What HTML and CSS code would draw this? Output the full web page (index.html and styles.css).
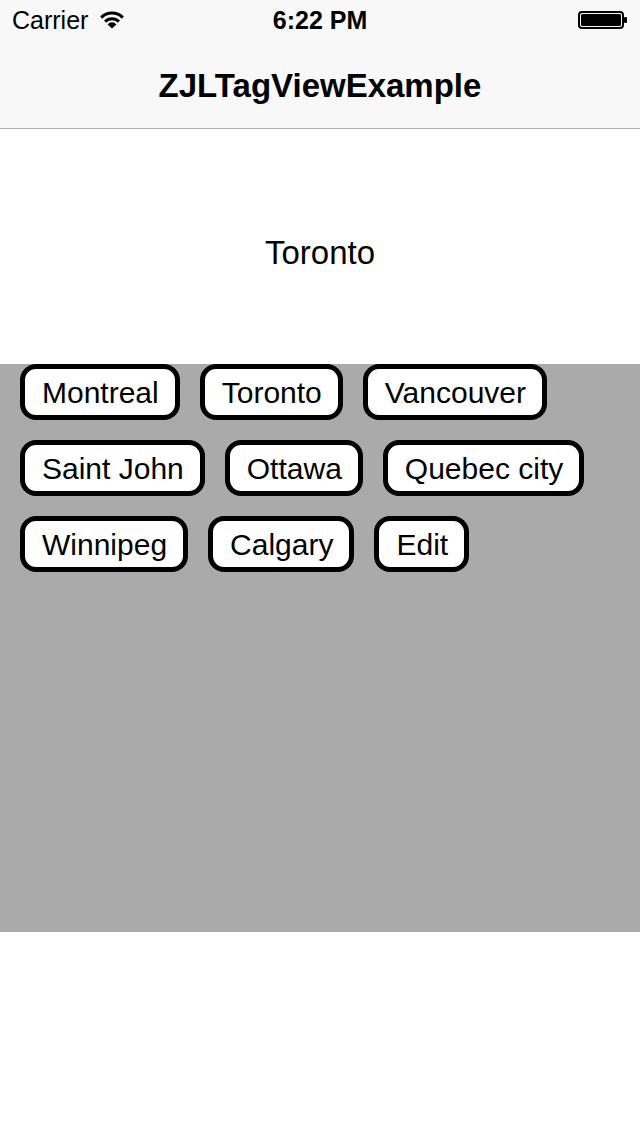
FILE: index.html
```html
<!DOCTYPE html>
<html>
<head>
<meta charset="utf-8">
<link rel="stylesheet" href="styles.css">
</head>
<body>
<div class="topbar">
  <div class="status">
    <div class="status-left">
      <span class="carrier">Carrier</span>
      <svg class="wifi" width="26" height="20" viewBox="0 0 26 20">
        <path d="M2.2 7.6 A15 15 0 0 1 23.8 7.6" fill="none" stroke="#000" stroke-width="3"/>
        <path d="M6.1 11.6 A9.6 9.6 0 0 1 19.9 11.6" fill="none" stroke="#000" stroke-width="3"/>
        <path d="M8.6 14.4 A5.6 5.6 0 0 1 17.4 14.4 L13 18.6 Z" fill="#000"/>
      </svg>
    </div>
    <div class="time">6:22 PM</div>
    <div class="status-right">
      <svg class="battery" width="50" height="20" viewBox="0 0 50 20">
        <rect x="1" y="2" width="44" height="16" rx="3" ry="3" fill="none" stroke="#000" stroke-width="2"/>
        <rect x="3" y="4" width="40" height="12" rx="1.5" ry="1.5" fill="#000"/>
        <rect x="46" y="7" width="3" height="6" rx="1" fill="#000"/>
      </svg>
    </div>
  </div>
  <div class="nav">ZJLTagViewExample</div>
</div>
<div class="label-area">Toronto</div>
<div class="tags-area">
  <div class="tag">Montreal</div>
  <div class="tag">Toronto</div>
  <div class="tag">Vancouver</div>
  <div class="tag">Saint John</div>
  <div class="tag">Ottawa</div>
  <div class="tag">Quebec city</div>
  <div class="tag">Winnipeg</div>
  <div class="tag">Calgary</div>
  <div class="tag">Edit</div>
</div>
</body>
</html>
```
FILE: styles.css
```css
html, body {
  margin: 0;
  padding: 0;
  background: #ffffff;
  font-family: "Liberation Sans", Arial, sans-serif;
  color: #000;
}
.topbar {
  background: #f8f8f8;
  border-bottom: 1px solid #b2b2b2;
}
.status {
  height: 40px;
  display: flex;
  align-items: center;
  justify-content: space-between;
  padding: 0 12px;
  position: relative;
}
.status-left {
  display: flex;
  align-items: center;
  gap: 11px;
}
.carrier {
  font-size: 25px;
}
.wifi {
  display: block;
}
.time {
  position: absolute;
  left: 0;
  right: 0;
  text-align: center;
  font-size: 25px;
  font-weight: bold;
  pointer-events: none;
}
.status-right {
  display: flex;
  align-items: center;
}
.battery {
  display: block;
}
.nav {
  height: 88px;
  display: flex;
  align-items: center;
  justify-content: center;
  font-size: 33px;
  font-weight: bold;
  padding-top: 3px;
  box-sizing: border-box;
}
.label-area {
  height: 235px;
  display: flex;
  align-items: center;
  justify-content: center;
  font-size: 33px;
  padding-top: 12px;
  box-sizing: border-box;
}
.tags-area {
  height: 568px;
  background: #aaaaaa;
  display: flex;
  flex-wrap: wrap;
  align-content: flex-start;
  gap: 20px 20px;
  padding: 0 20px;
  box-sizing: border-box;
}
.tag {
  height: 56px;
  box-sizing: border-box;
  border: 5px solid #000;
  border-radius: 16px;
  background: #fff;
  padding: 2px 16px 0 17px;
  font-size: 30px;
  line-height: 44px;
  white-space: nowrap;
}
```
